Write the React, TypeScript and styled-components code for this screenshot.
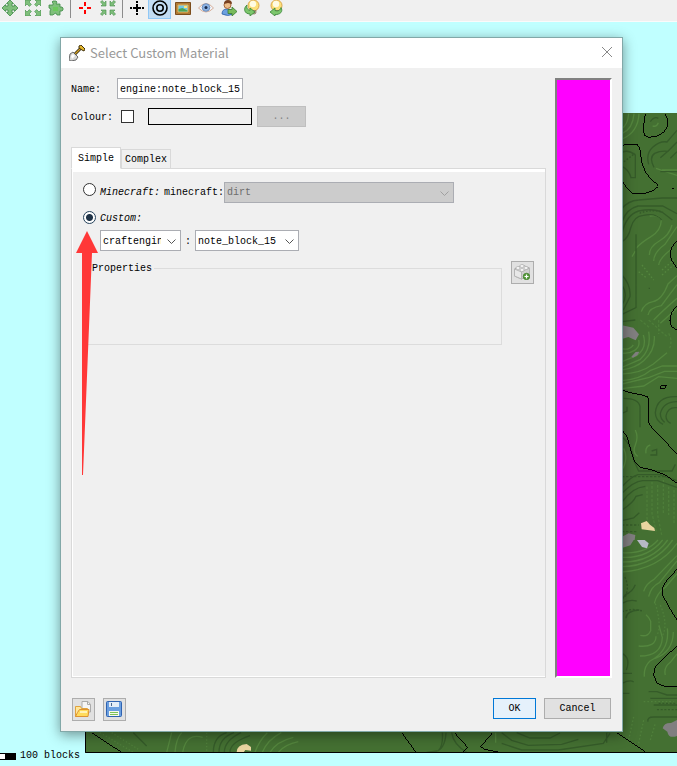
import React, { useState } from "react";
import type { ReactNode } from "react";
import styled, { createGlobalStyle } from "styled-components";

const mono = '"Liberation Mono", "Noto Sans CJK SC", monospace';

const GlobalStyle = createGlobalStyle`
  *, *::before, *::after { box-sizing: border-box; }
  html, body, #root { height: 100%; }
  body { margin: 0; overflow: hidden; background: #c0ffff; color: #000; font: 10px/12px ${mono}; }
  button, input, select { margin: 0; color: #000; font: inherit; }
`;

const Page = styled.div`
  display: flex;
  flex-direction: column;
  height: 100%;
`;

const Toolbar = styled.div`
  display: flex;
  flex: none;
  height: 22px;
  padding-left: 0;
  margin-left: -2px;
  overflow: hidden;
  background: #f0f0f0;
  border-bottom: 1px solid #fafafa;
`;

const ToolButton = styled.button<{ $active?: boolean }>`
  display: flex;
  flex: none;
  justify-content: center;
  width: 23px;
  height: 19px;
  padding: 0;
  background: ${(p) => (p.$active ? "#c2dcf3" : "transparent")};
  border: solid ${(p) => (p.$active ? "#90c8f6" : "transparent")};
  border-width: 0 1px 1px;
`;

const ToolDivider = styled.div`
  flex: none;
  width: 1px;
  height: 18px;
  margin: 0 2px 0 3px;
  background: #8c8c8c;
`;

const Workspace = styled.main`
  position: relative;
  flex: 1;
  min-height: 0;
  overflow: hidden;
`;

const MapCanvas = styled.svg`
  position: absolute;
  top: 91px;
  left: 85px;
  width: 592px;
  height: 640px;
`;

const ScaleBar = styled.div`
  position: absolute;
  bottom: 4px;
  left: 0;
  display: flex;
  align-items: center;
  gap: 4px;
`;

const ScaleMark = styled.div`
  width: 16px;
  height: 7px;
  background: linear-gradient(90deg, #fff 5px, #000 5px);
  border: solid #000;
  border-width: 1px 0;
`;

const Dialog = styled.section`
  position: absolute;
  inset: 15px 54px 34px 60px;
  display: flex;
  flex-direction: column;
  background: #f0f0f0;
  border: 1px solid #82a8a8;
  box-shadow: 0 3px 12px rgba(0, 0, 0, 0.42);
`;

const TitleBar = styled.header`
  display: flex;
  flex: none;
  align-items: center;
  gap: 5px;
  height: 30px;
  padding: 0 8px;
  background: #fff;
`;

const Title = styled.h1`
  flex: 1;
  margin: 0;
  color: #999;
  font: 400 13px/18px "Noto Sans CJK SC", sans-serif;
`;

const CloseButton = styled.button`
  display: flex;
  padding: 0;
  background: none;
  border: 0;
`;

const Body = styled.div`
  display: flex;
  flex: 1;
  gap: 9px;
  min-height: 0;
  padding: 10px 10px 0;
`;

const Form = styled.form`
  display: flex;
  flex: 1;
  flex-direction: column;
  min-width: 0;
`;

const Swatch = styled.div`
  width: 57px;
  background: #f0f;
  border: 2px solid #808080;
  border-right-color: #fff;
  border-bottom-color: #fff;
`;

const FieldRow = styled.div`
  display: flex;
  align-items: center;
  height: 21px;
  margin-bottom: 7px;
`;

const FieldLabel = styled.label`
  width: 46px;
  padding-top: 2px;
`;

const TextInput = styled.input`
  width: 126px;
  height: 21px;
  padding: 2px 2px 0;
  background: #fff;
  border: 1px solid #abadb3;
`;

const CheckBox = styled.input`
  appearance: none;
  width: 13px;
  height: 13px;
  margin: 0 14px 0 4px;
  background: #fff;
  border: 1px solid #333;
`;

const ColourBox = styled.div`
  width: 104px;
  height: 17px;
  margin-right: 5px;
  border: 1px solid #000;
`;

const PushButton = styled.button<{ $width: number; $primary?: boolean }>`
  width: ${(p) => p.$width}px;
  height: 21px;
  padding: 0;
  background: ${(p) => (p.$primary ? "#e5f1fb" : "#e1e1e1")};
  border: 1px solid ${(p) => (p.$primary ? "#0078d7" : "#adadad")};
  &:disabled { color: #838383; background: #ccc; border-color: #bfbfbf; }
`;

const Tabs = styled.div`
  display: flex;
  align-items: flex-end;
  height: 22px;
  margin: 13px 0 -1px;
`;

const Tab = styled.button<{ $selected: boolean }>`
  z-index: ${(p) => (p.$selected ? 1 : 0)};
  width: 50px;
  height: ${(p) => (p.$selected ? 22 : 20)}px;
  padding: 2px 0 0;
  background: ${(p) => (p.$selected ? "#fff" : "#f0f0f0")};
  border: 1px solid #d9d9d9;
  border-bottom-color: ${(p) => (p.$selected ? "#fff" : "#d9d9d9")};
`;

const TabPanel = styled.div`
  flex: 1;
  min-height: 0;
  padding: 9px 11px 0 11px;
  border: 1px solid #d9d9d9;
  box-shadow: inset 1px 3px #fff, inset 0 -1px #fff;
`;

const OptionRow = styled.div<{ $height: number }>`
  display: flex;
  align-items: center;
  height: ${(p) => p.$height}px;
`;

const Radio = styled.input`
  appearance: none;
  align-self: flex-start;
  width: 13px;
  height: 13px;
  margin: 5px 4px 0 0;
  background: #fff;
  border: 1px solid #333;
  border-radius: 50%;
  &:checked {
    background: radial-gradient(circle, #1f3347 3px, #fff 4px);
    border-color: #26435c;
  }
`;

const OptionLabel = styled.label`
  width: 64px;
  padding-top: 2px;
  font-style: italic;
`;

const PrefixLabel = styled.label`
  padding-top: 2px;
`;

const SelectFrame = styled.span<{ $width: number }>`
  position: relative;
  width: ${(p) => p.$width}px;
  height: 21px;
`;

const SelectBox = styled.select`
  appearance: none;
  width: 100%;
  height: 100%;
  padding: 2px 19px 0 2px;
  background: #fff;
  border: 1px solid #abadb3;
  border-radius: 0;
  &:disabled { color: #6d6d6d; background: #ccc; opacity: 1; }
`;

const Chevron = styled.svg<{ $muted?: boolean }>`
  position: absolute;
  top: 9px;
  right: 5px;
  width: 9px;
  height: 6px;
  fill: none;
  stroke: ${(p) => (p.$muted ? "#a0a0a0" : "#555")};
  pointer-events: none;
`;

const CustomFields = styled.div`
  display: flex;
  align-items: center;
  padding: 0 0 10px 17px;
`;

const Separator = styled.span`
  width: 14px;
  padding-top: 2px;
  text-align: center;
`;

const PropertiesRow = styled.div`
  display: flex;
  align-items: flex-start;
  gap: 9px;
  margin-left: 4px;
`;

const PropertyGroup = styled.fieldset`
  flex: 1;
  min-width: 0;
  height: 84px;
  margin: 0;
  padding: 0 3px;
  border: 1px solid #dcdcdc;
`;

const Legend = styled.legend`
  padding: 2px 2px 0 1px;
  line-height: 12px;
`;

const IconButton = styled.button`
  display: flex;
  align-items: center;
  justify-content: center;
  width: 23px;
  height: 23px;
  padding: 0 1px 1px 0;
  background: #e1e1e1;
  border: 1px solid #adadad;
`;

const Footer = styled.footer`
  display: flex;
  flex: none;
  gap: 8px;
  padding: 20px 11px 10px;
`;

const Spacer = styled.div`
  flex: 1;
`;

const Pointer = styled.svg`
  position: absolute;
  top: 193px;
  left: 15px;
  width: 23px;
  height: 245px;
  pointer-events: none;
`;

const Icon = ({ children }: { children: ReactNode }) => (
  <svg width="16" height="16" viewBox="0 0 16 16" aria-hidden="true">{children}</svg>
);

const green = { fill: "#7fbf7b", stroke: "#3f8b47", strokeWidth: 0.8 };
const outArrow = "M0 0h6L4 2l2.4 2.4-2 2L2 4 0 6z";
const inArrow = "M6 6H1l1.700-1.700L.5 2 2 .5l2.300 2.200L6 1z";

const Corners = ({ d }: { d: string }) => (
  <g {...green} strokeWidth={0.6}>
    {[0, 90, 180, 270].map((a) => <path key={a} d={d} transform={`rotate(${a} 8 8)`} />)}
  </g>
);

const Bulb = ({ next }: { next?: boolean }) => (
  <>
    <circle cx="9.500" cy="5.500" r="5.500" fill="#fce07a" stroke="#dba54c" />
    <circle cx="9" cy="4" r="3.200" fill="#fffbe3" />
    <path d="M7.500 10.500h4.500v2.500l-1 1H8.500l-1-1z" fill="#b3a58b" stroke="#7d705c" strokeWidth=".6" />
    <path
      d={next
        ? "M14 7.500c2.500 4-1 7.500-6 7v1.500L3 12l5-4v2.500c3 1 5 0 6-3z"
        : "M3 5C-1 8 0 14 6 14v2l5-4-5-4v2.500C4 10 2 8 3 5z"}
      fill="#7cc66c" stroke="#398439" strokeWidth=".8"
    />
  </>
);

const tools: { name: string; active?: boolean; dividerAfter?: boolean; art: ReactNode }[] = [
  { name: "Move", art: <path {...green} d="M8 0l3.500 3.500H10V6h2.500V4.500L16 8l-3.500 3.500V10H10v2.500h1.500L8 16l-3.500-3.500H6V10H3.500v1.500L0 8l3.500-3.500V6H6V3.500H4.500z" /> },
  { name: "Expand", art: <Corners d={outArrow} /> },
  { name: "Extensions", dividerAfter: true, art: <><path {...green} d="M1 5h4V3L4 2l1-1h3l1 1-1 2h4v3h2l1 1v2l-1 1h-2v4H9l-1-2-2 1-1 1H2v-4l1-2-2-1z" /><path d="M5 7h5v4H5z" fill="#6cc95c" /></> },
  { name: "Origin", art: <path d="M8 2v4m0 4v4M2 8h4m4 0h4" stroke="#f00" strokeWidth="2" /> },
  { name: "Contract", dividerAfter: true, art: <Corners d={inArrow} /> },
  { name: "Grid", art: <path d="M8 1v2m0 1v2m0 4v2m0 1v2M1 8h2m1 0h2m4 0h2m1 0h2M8 6v4M6 8h4" stroke="#000" strokeWidth="2" /> },
  { name: "Contours", active: true, art: <g fill="none" stroke="#000" strokeWidth="1.600"><circle cx="8" cy="8" r="7" /><circle cx="8" cy="8" r="3.200" /></g> },
  { name: "Overlay", art: <><path d="M.5 2.500h15v12H.5z" fill="#b07a34" stroke="#7c4d1c" /><path d="M3 5h10v7H3z" fill="#72c7e6" stroke="#e8b75b" /><path d="M3.500 9l4-1 5 2.500v1h-9z" fill="#4da453" /><path d="M9 6h3v2H9z" fill="#ffe778" /></> },
  { name: "View", art: <><path d="M.5 8Q8-1 15.500 8 8 16 .5 8z" fill="#f2f4f8" stroke="#d6ae9b" /><circle cx="8" cy="7.500" r="3.800" fill="#8cb4e6" stroke="#6d8fbc" /><circle cx="8" cy="7.500" r="1.500" fill="#172a4d" /></> },
  { name: "Walk", art: <><path d="M1 14q0-5 5-5t6 5q-5 3-11 0z" fill="#6ba0df" stroke="#2d61a9" strokeWidth=".8" /><circle cx="6.500" cy="5" r="3.500" fill="#edbd89" stroke="#a4653b" /><path d="M3 4q0-4 4-4t4 4L7 3z" fill="#784020" /><path d="M7 9.500h4V7l5 4.500-5 4.500v-2.500H7z" fill="#79bb5b" stroke="#397b30" strokeWidth=".8" /></> },
  { name: "Previous light", art: <Bulb /> },
  { name: "Next light", art: <Bulb next /> },
];

/* Terrain shading: bright slopes face the light, dark slopes face away. */
const Terrain = () => (
  <MapCanvas viewBox="85 113 592 640" role="img" aria-label="Terrain map">
    <path d="M85 113h592v640H85z" fill="#447032" />
    <g fill="none" strokeWidth="4">
      <g transform="translate(612 105) scale(.33333)">
        <g stroke="#54863e">
          <path d="M30 70q17-10 20-44M30 86q33-15 36-60M30 102q48-20 51-76M122 63q12 4 17-10M132 190l63 21M150 195h45M72 430q15-17 45-35t31-50q-10-18-35-12M112 450q0-25 30-42t38-48M125 468q0-25 34-50l36-53M140 480q3-20 35-45M88 620q8-25 35-30t45-53l27-25M108 630q4-22 40-28l47-63M125 645q25-26 70-65M145 655l50-45M60 455l10-17" />
          <path d="M90 480l35 45M80 500l25 20M150 510l35-30M150 495l35-30" strokeDasharray="5 6" />
        </g>
        <g stroke="#355b29">
          <path d="M30 142q20-9 40 8v68H57q-7-25-27-34M110 178q-9-32 12-51 22-20 43-16l30-35M126 187q-16-30 2-42 18-9 40-6l27-28M115 50q12-17 24-10M175 160l20-20M145 158l26-22M30 311q18-24 50-26l70-6h45M30 350q13-38 48-47h74l43 23M30 385q12-55 50-67 45-9 71 4l30 23M30 410q20-12 26-41 10-37 38-38 39-8 55 14M72 388v220L30 628M30 510q27 30 24 65l-20 40M30 540q20 30 0 60M145 200h50M30 650l40-5" />
          <path d="M36 170l33-25M83 325q30-13 70-4M110 550h4" strokeDasharray="5 5" />
        </g>
      </g>
      <g transform="translate(612 320) scale(.33333)">
        <g stroke="#54863e">
          <path d="M80 60q5 20-12 31t-38 8M94 45q12 40-20 62l-44 18M110 35q9 52-25 83l-55 24M127 48q3 44-32 74-23 21-65 28M165 98l-42 35q-38 28-93 29M195 138h-44l-35 13q-31 27-86 31M195 154h-38l-45 18-82 20M195 175l-55-5-45 28-65 8M64 75q-13 17-34 11M70 330q10 22 0 45t7 34M102 400q-3-20 13-25M35 385q15 30-5 65" />
          <path d="M85 0l30 25M110 0l55 50M140 0v42M170 40q12 20 3 45M105 500v95l12 35M120 485v95l14 60M137 495v90l12 60M154 480v100M170 500v85M186 510v100" strokeDasharray="8 5" strokeOpacity=".6" />
        </g>
        <g stroke="#355b29">
          <path d="M195 230q-60-3-65 48 0 22 23 35M195 245q-40 0-50 35 0 18 13 27M195 263q-28-3-33 25 0 15 14 22M35 235q45 0 49 25v62M30 350q30 25 35 70l15 33h100l10-20M115 405h19v-17l-15 5M30 500q30-32 48-36h65l52 18M30 520q35-36 62-38h45l58 20M30 546q31-44 70-47M30 570q35-22 42-41l20-5M30 602l35-8 17-16M45 260v13l-15 7" />
          <path d="M30 470h130M30 615h50M30 635h45" strokeDasharray="7 5" />
        </g>
      </g>
      <g transform="translate(612 540) scale(.33333)">
        <g stroke="#54863e">
          <path d="M30 38q70 5 108-38M30 52q77 4 122-52M30 66q90 1 137-66M30 80q97-2 152-80M30 96q110-8 165-86M95 154q7-23 30-35l70-72M110 170q7-30 32-42l53-65M127 190q8-32 34-49l34-40M85 286q22 6 31-14v-28q-5-13-14-20M80 318q52 5 52-29M84 348q64 0 67-55l-10-36M97 410q-2-30 17-47 60-31 52-98M128 356q55-20 56-80M160 405q-6-22 15-38l20-25" />
          <path d="M130 190q20 70 5 95M145 195q25 60 5 95M95 485h90M50 600l15-70M80 610l15-70M115 600l15-50" strokeDasharray="5 6" strokeOpacity=".7" />
        </g>
        <g stroke="#355b29">
          <path d="M70 134q-8 21-30 30l-10 15M30 190q22-13 44-7M42 235q0-22 40-25M30 340q27 14 13 50M30 400h30M30 430q25-12 35-4M30 460h22M110 455h25l30 10h30M115 475h80M125 495h70M108 545q-4-14 17-14h70" />
          <path d="M30 215l30-7 35 5M40 170q13-30-2-60M140 490h55M135 509h60" strokeDasharray="6 5" />
        </g>
      </g>
      <g transform="translate(0 660) scale(.33333)">
        <g stroke="#54863e">
          <path d="M500 277l15-59M525 277q3-40 20-59M548 277q11-60 60-45M765 277q12-35 37-59M787 277q15-37 57-59M810 277q20-33 70-45M835 277q20-24 60-32" />
          <path d="M300 218l100 59M335 218l80 50M620 218v59" strokeDasharray="4 6" strokeOpacity=".7" />
        </g>
        <path stroke="#355b29" d="M640 277q0-47 40-59M657 277q0-43 45-59M673 277q0-35 50-59M690 277q0-30 60-50M400 218l40 40" />
      </g>
      <g transform="translate(400 660) scale(.33333)">
        <path stroke="#355b29" d="M80 277l35-5q15-14 12-54M100 277q35-5 38-59M155 218q5 35 45 59M305 218l30 23 50 15 100-3 50-15M305 250l60 20h110l135-20 20-30M350 218l40 16h60l30-15M620 218v30" />
        <path stroke="#54863e" d="M287 218v30" />
      </g>
    </g>
    <g transform="translate(612 320) scale(.33333)">
      <path d="M30 16l34 7 17 20-10 18-22-10-19 6zM58 110l13-14 11-1-6 11-13 7zM30 650l20-10 20 5-2 15H30z" fill="#817f80" />
      <path d="M87 610l17-7 10 11 13 10 2 9-40-5z" fill="#ead5a0" />
    </g>
    <g transform="translate(612 540) scale(.33333)">
      <path d="M30 0h35L55 16l-25 8zM152 565q4-17 25-16l18-9v48q-25 9-29-13z" fill="#817f80" />
      <path d="M75 0h23l12 10-5 15-15-4z" fill="#b6b8c3" />
    </g>
    <g transform="translate(0 660) scale(.33333)">
      <path d="M710 277q0-23 30-25l13 9v11l-17-2-6 8z" fill="#ead5a0" />
    </g>
    <g fill="none" stroke="#000" strokeWidth="3" shapeRendering="crispEdges">
      <g transform="translate(612 105) scale(.33333)">
        <path d="M100 26l-3 20-3 29 4 17 14 5 23-4 20-11 13-20V45l-10-19M30 121l30-4 15 1 8 10 3 22 4 25 10 25 15 20 20 18 4 6-14 12-25 9H60l-15-15-15-22M181 252h5M195 408l-15 17-6 20 4 20 17 25M195 603l-15 17-6 20 4 25 17 10" />
      </g>
      <g transform="translate(612 320) scale(.33333)">
        <path d="M173 0l5 20 17 10M30 210l20 7 40 8 17 5 3 8v70l15 22 35 35 35 37M30 330l15 20 13 45 10 30 17 17 35 8 40 15 35 25M147 197h17l-8 9h-9z" />
      </g>
      <g transform="translate(612 540) scale(.33333)">
        <path d="M195 88l-30 32-15 25 2 20 18 35 25 40M195 318l-35 32-30 30-5 25 10 25 25 10h35M15 578l85 57" />
      </g>
      <g transform="translate(0 660) scale(.33333)">
        <path d="M275 218l30 20 60 39" />
      </g>
      <g transform="translate(400 660) scale(.33333)">
        <path d="M5 218l20 27 23 32M163 218l40 44-15 15M278 218l-36 42 13 8 45 9" />
      </g>
    </g>
    <path d="M85.500 113v639.500H677" fill="none" stroke="#000" />
  </MapCanvas>
);

const Arrow = ({ muted }: { muted?: boolean }) => (
  <Chevron $muted={muted} viewBox="0 0 9 6" aria-hidden="true"><path d="M.5.5l4 4 4-4" /></Chevron>
);

export default function App() {
  const [tab, setTab] = useState("Simple");
  const [name, setName] = useState("engine:note_block_15");
  const [kind, setKind] = useState("custom");

  return (
    <Page>
      <GlobalStyle />
      <Toolbar role="toolbar" aria-label="View tools">
        {tools.map((t) => (
          <React.Fragment key={t.name}>
            <ToolButton type="button" aria-label={t.name} $active={t.active}><Icon>{t.art}</Icon></ToolButton>
            {t.dividerAfter && <ToolDivider />}
          </React.Fragment>
        ))}
      </Toolbar>
      <Workspace>
        <Terrain />
        <ScaleBar><ScaleMark />100 blocks</ScaleBar>
        <Dialog role="dialog" aria-labelledby="dialog-title">
          <TitleBar>
            <Icon>
              <path d="M4 11l8-8" stroke="#332a13" strokeWidth="3" />
              <path d="M6 9l7-7" stroke="#d5a021" strokeWidth="1.300" />
              <path d="M10 1l2-1 4 4-1 2-2-1-3-2z" fill="#e3b62c" stroke="#41320d" />
              <path d="M1 9l3-2 5 5-2 3-5 1-2-1z" fill="#d8d8d8" stroke="#4a4a4a" strokeWidth=".8" />
              <path d="M2 11l2-2 2 2-3 3z" fill="#fff" />
            </Icon>
            <Title id="dialog-title">Select Custom Material</Title>
            <CloseButton type="button" aria-label="Close">
              <svg width="14" height="14" viewBox="0 0 14 14"><path d="M2 1l10 10M12 1L2 11" stroke="#888" /></svg>
            </CloseButton>
          </TitleBar>
          <Body>
            <Form id="material" onSubmit={(e) => e.preventDefault()}>
              <FieldRow>
                <FieldLabel htmlFor="name">Name:</FieldLabel>
                <TextInput id="name" value={name} onChange={(e) => setName(e.target.value)} />
              </FieldRow>
              <FieldRow>
                <FieldLabel htmlFor="colour">Colour:</FieldLabel>
                <CheckBox id="colour" type="checkbox" />
                <ColourBox />
                <PushButton type="button" $width={49} disabled>...</PushButton>
              </FieldRow>
              <Tabs role="tablist">
                {["Simple", "Complex"].map((t) => (
                  <Tab key={t} type="button" role="tab" aria-selected={tab === t} $selected={tab === t} onClick={() => setTab(t)}>{t}</Tab>
                ))}
              </Tabs>
              <TabPanel role="tabpanel">
                <OptionRow $height={28}>
                  <Radio id="minecraft" type="radio" name="kind" checked={kind === "minecraft"} onChange={() => setKind("minecraft")} />
                  <OptionLabel htmlFor="minecraft">Minecraft:</OptionLabel>
                  <PrefixLabel htmlFor="block">minecraft:</PrefixLabel>
                  <SelectFrame $width={230}>
                    <SelectBox id="block" disabled={kind !== "minecraft"}><option>dirt</option></SelectBox>
                    <Arrow muted={kind !== "minecraft"} />
                  </SelectFrame>
                </OptionRow>
                <OptionRow $height={24}>
                  <Radio id="custom" type="radio" name="kind" checked={kind === "custom"} onChange={() => setKind("custom")} />
                  <OptionLabel htmlFor="custom">Custom:</OptionLabel>
                </OptionRow>
                <CustomFields>
                  <SelectFrame $width={81}>
                    <SelectBox aria-label="Namespace"><option>craftengine</option></SelectBox>
                    <Arrow />
                  </SelectFrame>
                  <Separator>:</Separator>
                  <SelectFrame $width={104}>
                    <SelectBox aria-label="Block name"><option>note_block_15</option></SelectBox>
                    <Arrow />
                  </SelectFrame>
                </CustomFields>
                <PropertiesRow>
                  <PropertyGroup><Legend>Properties</Legend></PropertyGroup>
                  <IconButton type="button" aria-label="Add property">
                    <Icon>
                      <path d="M.5 5l8-4 7 3v6l-8 5-7-3z" fill="#eee" stroke="#aaa" />
                      <path d="M.5 5l7 3v7l-7-3z" fill="#e8e8e8" stroke="#b5b5b5" />
                      <path d="M7.500 8l8-4v6l-8 5z" fill="#cfcfcf" stroke="#b5b5b5" />
                      <g fill="#fff" stroke="#aaa" strokeWidth=".8"><ellipse cx="8" cy="2" rx="2.200" ry="1.400" /><ellipse cx="4" cy="4" rx="2.200" ry="1.400" /><ellipse cx="12" cy="4" rx="2.200" ry="1.400" /><ellipse cx="8" cy="6" rx="2.200" ry="1.400" /></g>
                      <circle cx="12.500" cy="12.500" r="3.300" fill="#54993a" stroke="#34751f" strokeWidth=".6" />
                      <path d="M12.500 10.500v4m-2-2h4" stroke="#fff" strokeWidth="1.200" />
                    </Icon>
                  </IconButton>
                </PropertiesRow>
              </TabPanel>
            </Form>
            <Swatch />
          </Body>
          <Footer>
            <IconButton type="button" aria-label="Open">
              <Icon>
                <path d="M7 .5h6l2.500 3V11H7z" fill="#f5f5f5" stroke="#aaa" />
                <path d="M12.500.5v3h3" fill="none" stroke="#aaa" />
                <path d="M.5 5.500h5l1 2h6v8H.5z" fill="#ffe69a" stroke="#e0a23c" />
                <path d="M4.500 8.500h9.500l-1 7H.5l2-4z" fill="#ffdb5c" stroke="#dc9232" />
                <path d="M5 11h7" stroke="#fff2b8" strokeWidth="2" />
              </Icon>
            </IconButton>
            <IconButton type="button" aria-label="Save">
              <Icon>
                <rect x=".5" y=".5" width="15" height="15" rx="1" fill="#6b9fe0" stroke="#2f62b0" />
                <path d="M3 1h10v5H3z" fill="#e4edf8" /><path d="M5.500 2v3" stroke="#49678e" strokeWidth="1" />
                <path d="M3 10h10v5H3z" fill="#f6faed" /><path d="M4 11.500h8M4 13.500h8" stroke="#7cc257" />
              </Icon>
            </IconButton>
            <Spacer />
            <PushButton type="submit" form="material" $width={43} $primary>OK</PushButton>
            <PushButton type="button" $width={67}>Cancel</PushButton>
          </Footer>
          <Pointer viewBox="0 0 23 245" aria-hidden="true"><path d="M11 0l11 22h-6L7 244H6V22H0z" fill="#ff3838" /></Pointer>
        </Dialog>
      </Workspace>
    </Page>
  );
}
